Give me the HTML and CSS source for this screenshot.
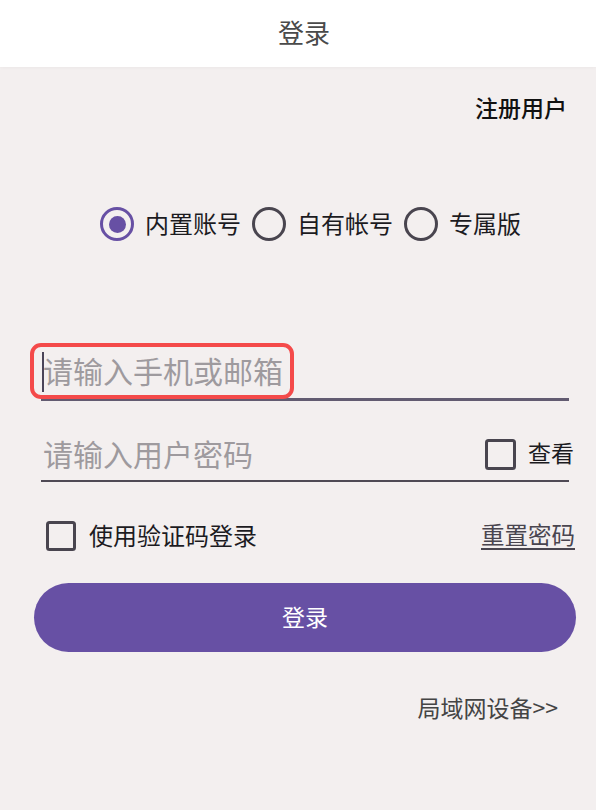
FILE: index.html
```html
<!DOCTYPE html>
<html lang="zh-CN">
<head>
<meta charset="utf-8">
<title>登录</title>
<link rel="stylesheet" href="styles.css">
</head>
<body>
<div class="page">
  <header class="appbar">登录</header>
  <main class="content">
    <div class="topbar"><span class="register">注册用户</span></div>

    <div class="radios">
      <label class="radio-item"><span class="radio checked"><span class="dot"></span></span><span class="radio-label">内置账号</span></label>
      <label class="radio-item"><span class="radio"></span><span class="radio-label">自有帐号</span></label>
      <label class="radio-item"><span class="radio"></span><span class="radio-label">专属版</span></label>
    </div>

    <div class="field field-account">
      <span class="caret"></span>
      <span class="placeholder">请输入手机或邮箱</span>
      <span class="highlight"></span>
    </div>

    <div class="field field-password">
      <span class="placeholder">请输入用户密码</span>
      <label class="check-item check-view"><span class="checkbox"></span><span class="check-label small">查看</span></label>
    </div>

    <div class="options">
      <label class="check-item"><span class="checkbox"></span><span class="check-label">使用验证码登录</span></label>
      <a class="reset">重置密码</a>
    </div>

    <button class="login-btn">登录</button>

    <div class="lan"><span>局域网设备&gt;&gt;</span></div>
  </main>
</div>
</body>
</html>
```

FILE: styles.css
```css
* { box-sizing: border-box; }

html, body {
  margin: 0;
  padding: 0;
}

body {
  font-family: "Noto Sans CJK SC", "Noto Sans", sans-serif;
  background: #f3efef;
  color: #1c1b1f;
}

.page {
  width: 596px;
  min-height: 810px;
  display: flex;
  flex-direction: column;
}

.appbar {
  height: 67px;
  background: #ffffff;
  display: flex;
  align-items: center;
  justify-content: center;
  font-size: 26px;
  line-height: 1;
  color: #4a4a4a;
  padding-left: 12px;
  padding-bottom: 3px;
  box-shadow: 0 1px 3px rgba(0, 0, 0, 0.03);
  position: relative;
  z-index: 1;
}

.content {
  flex: 1;
  background: #f3efef;
  display: flex;
  flex-direction: column;
}

.topbar {
  height: 30px;
  margin-top: 25px;
  padding-right: 29px;
  display: flex;
  align-items: center;
  justify-content: flex-end;
}

.register {
  font-size: 23px;
  line-height: 1;
  font-weight: 500;
  color: #111111;
}

.radios {
  height: 34px;
  margin-top: 85px;
  padding-left: 100px;
  display: flex;
  align-items: center;
  gap: 11px;
}

.radio-item {
  display: flex;
  align-items: center;
  gap: 11px;
}

.radio {
  width: 34px;
  height: 34px;
  border: 3.4px solid #49454f;
  border-radius: 50%;
  display: flex;
  align-items: center;
  justify-content: center;
}

.radio.checked {
  border-color: #6750a4;
}

.dot {
  width: 17px;
  height: 17px;
  border-radius: 50%;
  background: #6750a4;
}

.radio-label {
  font-size: 24px;
  line-height: 1;
  color: #1c1b1f;
  padding-bottom: 3px;
}

.field {
  position: relative;
  display: flex;
  align-items: center;
  margin-left: 41px;
  margin-right: 27px;
}

.field-account {
  height: 56px;
  margin-top: 104px;
  border-bottom: 3px solid #625b71;
}

.field-password {
  height: 54px;
  margin-top: 27px;
  border-bottom: 2px solid #4f4a55;
  justify-content: space-between;
}

.placeholder {
  font-size: 30px;
  line-height: 1;
  color: #9e9a9e;
  padding-left: 2px;
  padding-bottom: 3px;
}

.field-password .placeholder {
  padding-left: 2px;
}

.caret {
  position: absolute;
  left: 1px;
  top: 7px;
  width: 2px;
  height: 40px;
  background: #4a4458;
}

.highlight {
  position: absolute;
  left: -11px;
  top: -2px;
  width: 264px;
  height: 56px;
  border: 4px solid #f44a4a;
  border-radius: 11px;
}

.check-item {
  display: flex;
  align-items: center;
  gap: 13px;
}

.check-view {
  margin-right: -5px;
  gap: 12px;
}

.checkbox {
  width: 31px;
  height: 31px;
  border: 3.4px solid #49454f;
  border-radius: 3.5px;
}

.check-label {
  font-size: 24px;
  line-height: 1;
  color: #1c1b1f;
  padding-bottom: 3px;
}

.check-label.small {
  font-size: 23px;
}

.options {
  height: 30px;
  margin-top: 39px;
  margin-left: 46px;
  margin-right: 21px;
  display: flex;
  align-items: center;
  justify-content: space-between;
}

.options .checkbox {
  width: 30px;
  height: 30px;
}

.reset {
  font-size: 23.5px;
  line-height: 1;
  color: #49454f;
  text-decoration: underline;
  text-decoration-thickness: 2px;
  text-underline-offset: 4px;
  padding-bottom: 3px;
}

.login-btn {
  height: 69px;
  margin: 32px 20px 0 34px;
  border: none;
  border-radius: 35px;
  background: #6750a4;
  color: #ffffff;
  font-family: "Noto Sans CJK SC", "Noto Sans", sans-serif;
  font-size: 23px;
  line-height: 1;
  padding: 0 0 3px 0;
}

.lan {
  height: 30px;
  margin-top: 40px;
  padding-right: 38px;
  display: flex;
  align-items: center;
  justify-content: flex-end;
  font-size: 23px;
  line-height: 1;
  color: #444444;
}
```
